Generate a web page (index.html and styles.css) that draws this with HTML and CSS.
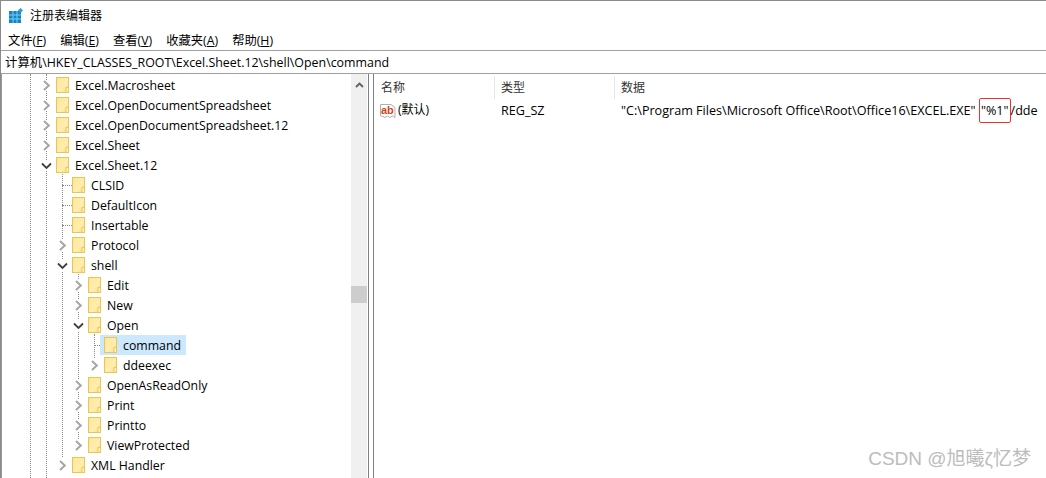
FILE: index.html
```html
<!DOCTYPE html>
<html lang="zh-CN">
<head>
<meta charset="utf-8">
<title>注册表编辑器</title>
<link rel="stylesheet" href="styles.css">
</head>
<body>
<svg class="defs" width="0" height="0" aria-hidden="true">
  <defs>
    <linearGradient id="fg" x1="0" y1="0" x2="1" y2="1">
      <stop offset="0" stop-color="#fde594"/>
      <stop offset="0.6" stop-color="#ffeeb0"/>
      <stop offset="1" stop-color="#fbdc7c"/>
    </linearGradient>
  </defs>
  <symbol id="folder" viewBox="0 0 13 16">
    <rect x="0.5" y="0.5" width="12" height="15" fill="url(#fg)" stroke="#eac650"/>
    <path d="M10 10.500h2.500v5H10z" fill="#fff2c4" stroke="#eac650"/>
  </symbol>
  <symbol id="right" viewBox="0 0 11 11"><path d="M3 1l4.800 4.500L3 10" fill="none" stroke="#a6a6a6" stroke-width="2"/></symbol>
  <symbol id="down" viewBox="0 0 11 11"><path d="M1 3.500l4.500 4.500L10 3.500" fill="none" stroke="#404040" stroke-width="1.800"/></symbol>
</svg>
<div class="window">
  <header class="titlebar">
    <svg class="appicon" width="15" height="15" viewBox="0 0 15 15">
      <rect x="0" y="3" width="12" height="12" fill="#0f86c8"/>
      <path d="M4 3v12M8 3v12M0 7h12M0 11h12" stroke="#7fcbef" stroke-width="1"/>
      <rect x="9.700" y="0.700" width="3.600" height="3.600" fill="#2f9fd9" transform="rotate(45 11.500 2.500)"/>
    </svg>
    <span>注册表编辑器</span>
  </header>
  <nav class="menubar">
    <span>文件(<u>F</u>)</span><span>编辑(<u>E</u>)</span><span>查看(<u>V</u>)</span><span>收藏夹(<u>A</u>)</span><span>帮助(<u>H</u>)</span>
  </nav>
  <div class="address">计算机\HKEY_CLASSES_ROOT\Excel.Sheet.12\shell\Open\command</div>
  <main class="split">
    <section class="tree">
      <i class="guide g1"></i><i class="guide g2"></i><i class="guide g3"></i><i class="guide g4"></i><i class="guide g5"></i>
      <ul class="rows">
        <li class="row l0"><svg class="tw"><use href="#right"/></svg><svg class="fd"><use href="#folder"/></svg><span class="nm">Excel.Macrosheet</span></li>
        <li class="row l0"><svg class="tw"><use href="#right"/></svg><svg class="fd"><use href="#folder"/></svg><span class="nm">Excel.OpenDocumentSpreadsheet</span></li>
        <li class="row l0"><svg class="tw"><use href="#right"/></svg><svg class="fd"><use href="#folder"/></svg><span class="nm">Excel.OpenDocumentSpreadsheet.12</span></li>
        <li class="row l0"><svg class="tw"><use href="#right"/></svg><svg class="fd"><use href="#folder"/></svg><span class="nm">Excel.Sheet</span></li>
        <li class="row l0"><svg class="tw"><use href="#down"/></svg><svg class="fd"><use href="#folder"/></svg><span class="nm">Excel.Sheet.12</span></li>
        <li class="row l1"><i class="tick"></i><svg class="fd"><use href="#folder"/></svg><span class="nm">CLSID</span></li>
        <li class="row l1"><i class="tick"></i><svg class="fd"><use href="#folder"/></svg><span class="nm">DefaultIcon</span></li>
        <li class="row l1"><i class="tick"></i><svg class="fd"><use href="#folder"/></svg><span class="nm">Insertable</span></li>
        <li class="row l1"><svg class="tw"><use href="#right"/></svg><svg class="fd"><use href="#folder"/></svg><span class="nm">Protocol</span></li>
        <li class="row l1"><svg class="tw"><use href="#down"/></svg><svg class="fd"><use href="#folder"/></svg><span class="nm">shell</span></li>
        <li class="row l2"><svg class="tw"><use href="#right"/></svg><svg class="fd"><use href="#folder"/></svg><span class="nm">Edit</span></li>
        <li class="row l2"><svg class="tw"><use href="#right"/></svg><svg class="fd"><use href="#folder"/></svg><span class="nm">New</span></li>
        <li class="row l2"><svg class="tw"><use href="#down"/></svg><svg class="fd"><use href="#folder"/></svg><span class="nm">Open</span></li>
        <li class="row l3"><i class="tick"></i><span class="sel"><svg class="fd"><use href="#folder"/></svg><span class="nm">command</span></span></li>
        <li class="row l3"><svg class="tw"><use href="#right"/></svg><svg class="fd"><use href="#folder"/></svg><span class="nm">ddeexec</span></li>
        <li class="row l2"><svg class="tw"><use href="#right"/></svg><svg class="fd"><use href="#folder"/></svg><span class="nm">OpenAsReadOnly</span></li>
        <li class="row l2"><svg class="tw"><use href="#right"/></svg><svg class="fd"><use href="#folder"/></svg><span class="nm">Print</span></li>
        <li class="row l2"><svg class="tw"><use href="#right"/></svg><svg class="fd"><use href="#folder"/></svg><span class="nm">Printto</span></li>
        <li class="row l2"><svg class="tw"><use href="#right"/></svg><svg class="fd"><use href="#folder"/></svg><span class="nm">ViewProtected</span></li>
        <li class="row l1"><svg class="tw"><use href="#right"/></svg><svg class="fd"><use href="#folder"/></svg><span class="nm">XML Handler</span></li>
      </ul>
      <div class="scrollbar">
        <svg class="arrow" width="9" height="6" viewBox="0 0 9 6"><path d="M1 5l3.500-3.500L8 5" fill="none" stroke="#606060" stroke-width="1.800"/></svg>
        <div class="thumb"></div>
      </div>
    </section>
    <section class="values">
      <div class="heads">
        <span class="col c-name">名称</span><span class="col c-type">类型</span><span class="col c-data">数据</span>
      </div>
      <div class="value">
        <span class="cell c-name">
          <svg class="ab" width="16" height="17" viewBox="0 0 16 17">
            <path d="M0.500 2.500h10.500l4 3v10l-2.500-1.500-2.500 1.500-2.500-1.500-2.500 1.500-4.500-2z" fill="#fff" stroke="#b0b0b0"/>
            <text x="1" y="11.500" class="abtext">ab</text>
          </svg><span class="dflt">(默认)</span></span>
        <span class="cell c-type">REG_SZ</span>
        <span class="cell c-data">"C:\Program Files\Microsoft Office\Root\Office16\EXCEL.EXE" <span class="mark">"%1"</span>/dde</span>
      </div>
    </section>
  </main>
  <div class="watermark">CSDN @旭曦ζ忆梦</div>
</div>
</body>
</html>
```
FILE: styles.css
```css
* { box-sizing: border-box; }
html, body { margin: 0; padding: 0; height: 100%; background: #fff; overflow: hidden; }
body { font-family: "Open Sans", "Noto Sans CJK SC", sans-serif; font-size: 12px; color: #000; }
.defs { position: absolute; }
.window { position: relative; height: 478px; border-top: 1px solid #8a8a8a; border-left: 1px solid #8a8a8a; display: flex; flex-direction: column; }
.titlebar { height: 29px; display: flex; align-items: center; padding: 0 0 1px 8px; gap: 6px; font-size: 12px; }
.menubar { height: 20px; display: flex; align-items: center; padding-left: 7px; gap: 14px; font-size: 12.300px; }
.menubar span { white-space: nowrap; }
.address { height: 24px; border-top: 1px solid #a0a0a0; border-bottom: 1px solid #a0a0a0; display: flex; align-items: center; padding-left: 4px; white-space: nowrap; font-size: 12.400px; }
.split { flex: 1; display: flex; min-height: 0; }
.tree { position: relative; width: 368px; flex: none; border-right: 1px solid #7f7f88; border-left: 1px solid #9a9a9a; display: flex; justify-content: space-between; overflow: hidden; font-size: 12.300px; }
.rows { list-style: none; margin: 0; padding: 1px 0 0 1px; }
.row { height: 20px; display: flex; align-items: center; position: relative; white-space: nowrap; }
.l0 { padding-left: 38px; }
.l1 { padding-left: 54px; }
.l2 { padding-left: 70px; }
.l3 { padding-left: 86px; }
.tw { width: 11px; height: 11px; flex: none; margin-right: 4px; background: #fff; }
.tick { width: 10px; height: 0; flex: none; margin-left: 5px; border-top: 1px dotted #8a8a8a; }
.fd { width: 13px; height: 16px; flex: none; margin-right: 6px; }
.sel { display: flex; align-items: center; background: #cce8ff; height: 20px; margin-left: -4px; padding: 0 5px 0 4px; }
.guide { position: absolute; top: 0; width: 0; border-left: 1px dotted #8a8a8a; }
.g1 { left: 28px; height: 404px; }
.g2 { left: 44px; height: 404px; }
.g3 { left: 60px; top: 100px; height: 283px; }
.g4 { left: 76px; top: 200px; height: 171px; }
.g5 { left: 92px; top: 260px; height: 24px; }
.scrollbar { width: 16px; flex: none; background: #f0f0f0; position: relative; display: flex; justify-content: center; padding-top: 8px; margin-right: 1px; }
.arrow { display: block; }
.thumb { position: absolute; left: 0; right: 0; top: 212px; height: 17px; background: #cdcdcd; }
.values { flex: 1; min-width: 0; border-left: 1px solid #7f7f88; margin-left: 4px; }
.heads { height: 26px; display: flex; align-items: center; }
.col { height: 23px; display: flex; align-items: center; border-right: 1px solid #e5e5e5; color: #333; }
.c-name { width: 121px; padding-left: 7px; flex: none; }
.c-type { width: 120px; padding-left: 6px; flex: none; }
.c-data { padding-left: 6px; }
.col.c-data { border-right: 0; }
.value { height: 20px; display: flex; align-items: center; white-space: nowrap; font-size: 12.600px; }
.cell { display: flex; align-items: center; white-space: pre; }
.ab { margin-right: 2px; margin-left: -1px; flex: none; }
.abtext { font: bold 11px "Liberation Sans", sans-serif; fill: #d2431c; }
.dflt { font-size: 12px; line-height: 15px; padding-bottom: 2px; }
.mark { display: inline-block; border: 1px solid #e33; border-radius: 2px; padding: 4px 1px; line-height: 15px; }
.watermark { position: absolute; right: 15px; bottom: 8px; font-family: "Liberation Sans", "Noto Sans CJK SC", sans-serif; font-size: 19px; color: #bcbcbc; white-space: nowrap; }
```
